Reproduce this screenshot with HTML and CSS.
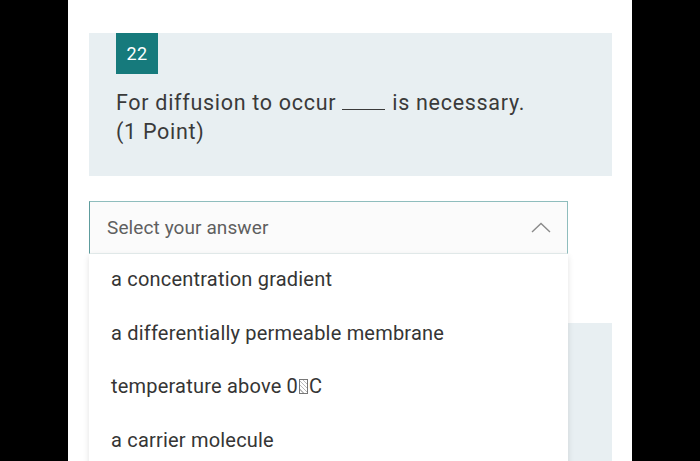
FILE: index.html
```html
<!DOCTYPE html>
<html>
<head>
<meta charset="utf-8">
<link rel="stylesheet" href="styles.css">
</head>
<body>
<div class="page">
  <div class="card">
    <div class="badge">22</div>
    <div class="question">For diffusion to occur <span class="blank"></span> is necessary.<br>(1 Point)</div>
  </div>
  <div class="select-wrap">
    <div class="select">
      <span class="placeholder">Select your answer</span>
      <svg class="chev" width="20" height="11" viewBox="0 0 20 11"><path d="M1 10 L10 1.5 L19 10" fill="none" stroke="#8a8a8a" stroke-width="1.4"/></svg>
    </div>
    <ul class="menu">
      <li>a concentration gradient</li>
      <li>a differentially permeable membrane</li>
      <li>temperature above 0<span class="tofu"></span>C</li>
      <li>a carrier molecule</li>
    </ul>
  </div>
  <div class="card next"></div>
</div>
</body>
</html>
```
FILE: styles.css
```css
html, body {
  margin: 0;
  padding: 0;
  background: #000;
  height: 100%;
  overflow: hidden;
}
.page {
  margin-left: 68px;
  width: 564px;
  height: 461px;
  background: #fff;
  padding: 33px 20px 0 21px;
  box-sizing: border-box;
  font-family: Roboto, "Liberation Sans", sans-serif;
  overflow: hidden;
}
.card {
  background: #e8eff2;
  padding: 0 20px 30px 27px;
}
.badge {
  width: 42px;
  height: 41px;
  background: #167a7c;
  color: #fff;
  font-size: 18px;
  letter-spacing: 0.5px;
  display: flex;
  align-items: center;
  justify-content: center;
}
.question {
  margin-top: 14px;
  font-size: 21.5px;
  letter-spacing: 0.7px;
  line-height: 29px;
  color: #3a3a3a;
}
.blank {
  display: inline-block;
  width: 43px;
  border-bottom: 1.5px solid #3a3a3a;
  vertical-align: baseline;
  margin-right: 1px;
}
.select-wrap {
  position: relative;
  margin-top: 25px;
  width: 479px;
}
.select {
  height: 53px;
  box-sizing: border-box;
  border: 1px solid #8fbdbd;
  border-left-color: #5e9c9d;
  border-bottom-color: #e6eeee;
  background: #fbfbfb;
  display: flex;
  align-items: center;
  justify-content: space-between;
  padding: 0 16px 0 17px;
  font-size: 19px;
  letter-spacing: 0.1px;
  color: #5f5f5f;
}
.chev {
  display: block;
}
.menu {
  position: absolute;
  left: 0;
  top: 53px;
  width: 479px;
  margin: 0;
  padding: 0;
  list-style: none;
  background: #fff;
  box-shadow: 0 2px 6px rgba(0,0,0,0.12);
  z-index: 2;
}
.menu li {
  height: 53.5px;
  box-sizing: border-box;
  padding: 0 0 3px 22px;
  display: flex;
  align-items: center;
  font-size: 20px;
  letter-spacing: 0.2px;
  color: #353535;
}
.tofu {
  display: inline-block;
  width: 9px;
  height: 15px;
  border: 1px solid #777;
  box-sizing: border-box;
  margin: 0 1px;
  background: repeating-linear-gradient(45deg, #fff 0 2px, #bbb 2px 3px);
}
.next {
  margin-top: 69px;
  height: 200px;
  padding: 0;
}
```
